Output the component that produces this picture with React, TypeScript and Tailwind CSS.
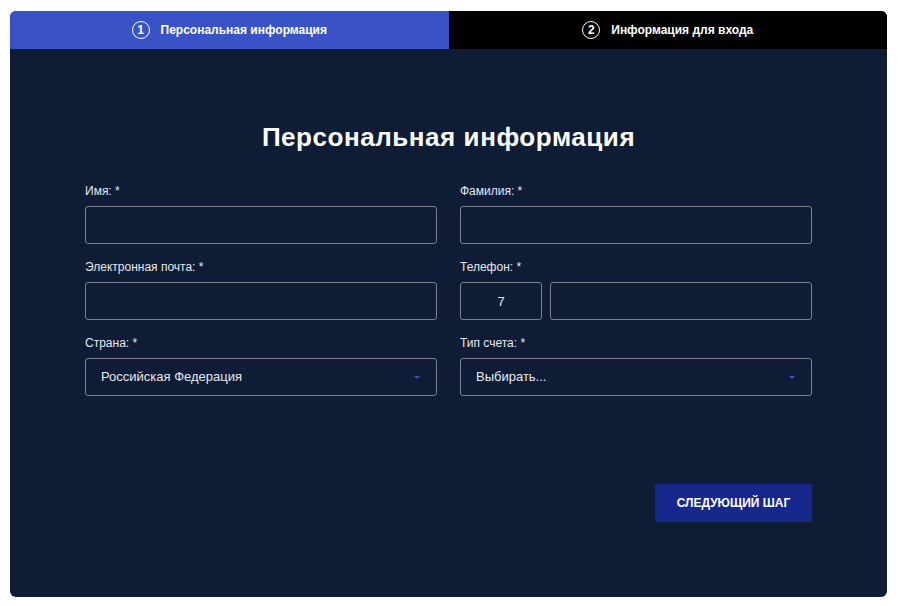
import { useState } from 'react'

const labelCls = 'block text-[12px] leading-[14px] text-[#e6e9ef] mb-2'
const boxCls =
  'h-[38px] min-w-0 rounded-[3px] border border-[#7c818b] bg-transparent text-[13px] text-[#e6e9ef] outline-none'

function Field({ label, children }: { label: string; children: React.ReactNode }) {
  return (
    <div>
      <label className={labelCls}>{label}</label>
      {children}
    </div>
  )
}

function Select({ value }: { value: string }) {
  return (
    <div className={`${boxCls} w-full flex items-center justify-between pl-[15px] pr-[16px]`}>
      <span>{value}</span>
      <span className="w-0 h-0 border-l-[3px] border-r-[3px] border-t-[3px] border-l-transparent border-r-transparent border-t-[#3b52c4]" />
    </div>
  )
}

export default function App() {
  const [step] = useState(1)
  const tabs = ['Персональная информация', 'Информация для входа']

  return (
    <div
      className="min-h-[606px] bg-white pt-[11px] pl-[10px] pr-[14px]"
      style={{ fontFamily: '"Liberation Sans", Arial, sans-serif' }}
    >
      <div className="rounded-[6px] overflow-hidden bg-[#0e1c35] h-[586px] flex flex-col">
        {/* Tabs */}
        <div className="flex h-[38px] shrink-0">
          {tabs.map((t, i) => (
            <div
              key={t}
              className={`flex-1 flex items-center justify-center gap-[11px] text-white text-[12px] font-bold ${
                i + 1 === step ? 'bg-[#3953c6]' : 'bg-black'
              }`}
            >
              <span className="w-[18px] h-[18px] rounded-full border-[1.5px] border-white flex items-center justify-center text-[12px] leading-none">
                {i + 1}
              </span>
              <span>{t}</span>
            </div>
          ))}
        </div>

        {/* Body */}
        <div className="flex-1 px-[75px] pt-[73px]">
          <h1 className="text-center text-white text-[26px] leading-[30px] font-bold tracking-[0.55px]">
            Персональная информация
          </h1>

          <div className="mt-[32px] grid grid-cols-2 gap-x-[23px] gap-y-[16px]">
            <Field label="Имя: *">
              <input className={`${boxCls} w-full`} />
            </Field>
            <Field label="Фамилия: *">
              <input className={`${boxCls} w-full`} />
            </Field>
            <Field label="Электронная почта: *">
              <input className={`${boxCls} w-full`} />
            </Field>
            <Field label="Телефон: *">
              <div className="flex gap-[8px]">
                <input className={`${boxCls} w-[82px] shrink-0 text-center`} defaultValue="7" />
                <input className={`${boxCls} flex-1`} />
              </div>
            </Field>
            <Field label="Страна: *">
              <Select value="Российская Федерация" />
            </Field>
            <Field label="Тип счета: *">
              <Select value="Выбирать..." />
            </Field>
          </div>

          <div className="flex justify-end mt-[88px]">
            <button className="h-[38px] w-[157px] rounded-[2px] bg-[#16288b] text-white text-[12px] font-bold">
              СЛЕДУЮЩИЙ ШАГ
            </button>
          </div>
        </div>
      </div>
    </div>
  )
}
